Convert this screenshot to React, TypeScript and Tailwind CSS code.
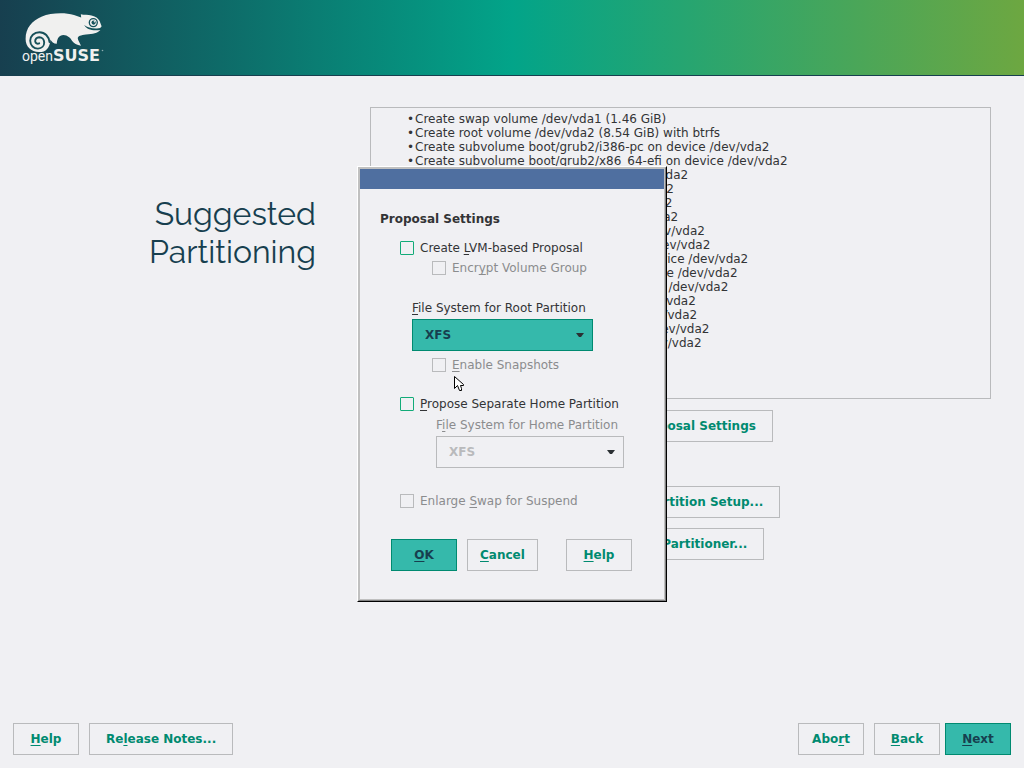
import type { ReactNode } from "react";

const swapAndRoot = [
  "Create swap volume /dev/vda1 (1.46 GiB)",
  "Create root volume /dev/vda2 (8.54 GiB) with btrfs",
];

const subvolumes = [
  "boot/grub2/i386-pc",
  "boot/grub2/x86_64-efi",
  "home",
  "opt",
  "srv",
  "tmp",
  "usr/local",
  "var/crash",
  "var/lib/mailman",
  "var/lib/named",
  "var/lib/pgsql",
  "var/log",
  "var/opt",
  "var/spool",
  "var/tmp",
];

const actions = [
  ...swapAndRoot,
  ...subvolumes.map((name) => `Create subvolume ${name} on device /dev/vda2`),
];

/** Label text with its keyboard accelerator underlined; "&" marks the letter. */
function Accel({ text }: { text: string }) {
  const at = text.indexOf("&");
  if (at < 0) return <>{text}</>;
  return (
    <span>
      {text.slice(0, at)}
      <span className="underline decoration-1 underline-offset-2 [text-decoration-skip-ink:none]">
        {text[at + 1]}
      </span>
      {text.slice(at + 2)}
    </span>
  );
}

const buttonStyles = {
  plain: "h-8 min-w-[66px] border border-[#b9babc] px-3 font-bold whitespace-nowrap text-[#008a70]",
  wide: "h-8 min-w-[66px] border border-[#b9babc] px-4 font-bold whitespace-nowrap text-[#008a70]",
  primary:
    "h-8 min-w-[66px] border border-[#008a70] bg-[#35b9ab] px-3 font-bold whitespace-nowrap text-[#173f4f]",
};

function Button({ text, kind = "plain" }: { text: string; kind?: keyof typeof buttonStyles }) {
  return (
    <button type="button" className={buttonStyles[kind]}>
      <Accel text={text} />
    </button>
  );
}

function CheckBox({ text, disabled = false }: { text: string; disabled?: boolean }) {
  return (
    <label
      className={
        disabled
          ? "flex h-5 items-center gap-1.5 whitespace-nowrap text-[#8b8c8e]"
          : "flex h-5 items-center gap-1.5 whitespace-nowrap"
      }
    >
      <input
        type="checkbox"
        disabled={disabled}
        className="size-3.5 shrink-0 appearance-none rounded-[1px] border border-[#12ab78] disabled:rounded-none disabled:border-[#b9babc]"
      />
      <Accel text={text} />
    </label>
  );
}

function SelectField({ id, text, disabled = false }: { id: string; text: string; disabled?: boolean }) {
  return (
    <div className="flex flex-col gap-px">
      <label
        htmlFor={id}
        className={disabled ? "h-5 leading-5 whitespace-nowrap text-[#8b8c8e]" : "h-5 leading-5 whitespace-nowrap"}
      >
        <Accel text={text} />
      </label>
      <div className="relative">
        <select
          id={id}
          disabled={disabled}
          className="h-8 w-full appearance-none border border-[#008a70] bg-[#35b9ab] px-3 font-bold text-[#173f4f] opacity-100 disabled:border-[#b9babc] disabled:bg-transparent disabled:text-[#b9babc]"
        >
          <option>XFS</option>
        </select>
        <svg
          viewBox="0 0 8 4"
          className="pointer-events-none absolute top-3.5 right-[9px] h-1 w-2 fill-[#2b3033]"
          aria-hidden="true"
        >
          <path d="M0 0H8L5 4H3Z" />
        </svg>
      </div>
    </div>
  );
}

function Logo() {
  return (
    <svg viewBox="0 0 110 75" className="h-[75px] w-[110px]" role="img" aria-label="openSUSE">
      <path
        fill="#f0f0ef"
        d="M25.6 39C25.6 28 32 20.500 42 16.500C50 13.200 64 12.200 74 15L81.200 17.400L80.800 14.200C84 15 88 14.500 91.500 15.400C96 16.600 98.600 18.600 99.600 21L101.600 26.300C100.800 28 99.500 28.500 96 28.400C91 28.400 87 27.400 84.200 25C86.500 29.400 92 31 100.400 30C97.500 33.300 93 34 86 34.400C81 35 77.500 36 77.800 38.500C78 40.600 79.600 42.200 81 45.800C77 44.800 73.500 43.400 72.200 41C70.600 37.800 67.500 35 63.500 34.900C59 34.900 57 38.500 56.800 43.800C53.500 43.500 51.500 41.600 50.400 39.400C50 48 45.500 52.300 39 52.100C31 51.900 25.600 46.500 25.600 39Z"
      />
      <path
        fill="none"
        stroke="#17505a"
        strokeWidth="1.900"
        strokeLinecap="round"
        d="M49.500 42C48.800 36.500 45 32.200 39.500 32.200C34 32.300 30.200 36 30.200 40.800C30.300 45.500 33.800 48.700 38 48.600C41.800 48.400 44.300 45.700 44.200 42.400C44.100 39.200 41.900 37.200 39.200 37.200C36.700 37.300 35 39.200 35.200 41.300C35.500 43.200 37.200 44.300 39.200 43.300"
      />
      <circle cx="93.300" cy="22.600" r="4" fill="none" stroke="#14515b" strokeWidth="1.300" />
      <circle cx="93.600" cy="22.600" r="2.100" fill="#14515b" />
      <circle cx="94.400" cy="21.800" r=".7" fill="#f0f0ef" />
      <text x="22" y="61" fill="#f0f0ef" className="font-[Roboto,sans-serif] text-[14px]">
        open
      </text>
      <text x="53" y="61" fill="#f0f0ef" className="font-['DejaVu_Sans',sans-serif] text-[16px] font-bold">
        SUSE
      </text>
      <circle cx="102.500" cy="50.500" r=".8" fill="#8faeb0" />
    </svg>
  );
}

function Frame({ children }: { children: ReactNode }) {
  return (
    <div className="border border-t-white border-r-black border-b-black border-l-white">
      <div className="border border-t-[#c0c0c0] border-r-[#808080] border-b-[#808080] border-l-[#c0c0c0]">
        <div className="relative border border-[#c0c0c0] bg-[#f0f0f3]">{children}</div>
      </div>
    </div>
  );
}

function ProposalDialog() {
  return (
    <div className="fixed inset-0 flex items-center justify-center">
      <div role="dialog" aria-labelledby="dialog-title" className="w-[310px]">
        <Frame>
          <div className="h-5 bg-[#4f6fa0]" />
          <div className="px-5 pt-5 pb-7">
            <h2 id="dialog-title" className="h-5 leading-5 font-bold">
              Proposal Settings
            </h2>
            <div className="mt-[9px] pl-5">
              <CheckBox text="Create &LVM-based Proposal" />
              <div className="pl-8">
                <CheckBox text="Encr&ypt Volume Group" disabled />
              </div>
              <div className="mt-5 w-[193px] pl-3">
                <SelectField id="root-fs" text="&File System for Root Partition" />
              </div>
              <div className="mt-1 pl-8">
                <CheckBox text="&Enable Snapshots" disabled />
              </div>
              <div className="mt-[19px]">
                <CheckBox text="&Propose Separate Home Partition" />
              </div>
              <div className="mt-px w-56 pl-9">
                <SelectField id="home-fs" text="F&ile System for Home Partition" disabled />
              </div>
              <div className="mt-[23px]">
                <CheckBox text="Enlarge &Swap for Suspend" disabled />
              </div>
            </div>
            <div className="mt-7 flex justify-between pr-3 pl-[11px]">
              <div className="flex gap-2.5">
                <Button text="&OK" kind="primary" />
                <Button text="&Cancel" />
              </div>
              <Button text="&Help" />
            </div>
          </div>
          <svg
            viewBox="0 0 11 17"
            className="pointer-events-none absolute top-[207px] left-[94px] h-[17px] w-[11px]"
            aria-hidden="true"
          >
            <path
              d="M.5.5V12.500L3.500 9.500L5.500 14.500H7.500V12.500L6.500 9.500H9.500V8.500Z"
              fill="white"
              stroke="black"
            />
          </svg>
        </Frame>
      </div>
    </div>
  );
}

export default function App() {
  return (
    <div className="flex min-h-screen flex-col bg-[#f0f0f3] font-['DejaVu_Sans',sans-serif] text-[12px] leading-[14px] text-[#333436]">
      <header className="h-[76px] border-b border-[#173f4f] bg-linear-to-r/srgb from-[#173f4f] via-[#02a489] to-[#6da741]">
        <Logo />
      </header>

      <main className="grid flex-1 grid-cols-[316px_1fr] content-start gap-x-[54px] pt-[31px] pr-[33px]">
        <h1 className="pt-[88px] text-right font-[Raleway,Lato,sans-serif] text-[32px] leading-[38px] font-normal text-[#173f4f]">
          Suggested
          <br />
          Partitioning
        </h1>
        <section className="flex flex-col items-center" aria-label="Partitioning proposal">
          <ul className="min-h-[292px] w-full border border-[#b9babc] pt-1 pl-11">
            {actions.map((action) => (
              <li
                key={action}
                className="before:-ml-2 before:inline-block before:w-2 before:content-['•']"
              >
                {action}
              </li>
            ))}
          </ul>
          <div className="mt-[11px] flex flex-col items-center">
            <Button text="Edit Proposal Settings" kind="wide" />
            <div className="mt-11 flex flex-col items-center gap-2.5">
              <Button text="Create Partition Setup..." kind="wide" />
              <Button text="Expert Partitioner..." kind="wide" />
            </div>
          </div>
        </section>
      </main>

      <footer className="flex justify-between p-[13px]">
        <div className="flex gap-2.5">
          <Button text="&Help" />
          <Button text="Re&lease Notes..." kind="wide" />
        </div>
        <div className="flex gap-[5px]">
          <div className="flex gap-2.5">
            <Button text="Abo&rt" />
            <Button text="&Back" />
          </div>
          <Button text="&Next" kind="primary" />
        </div>
      </footer>

      <ProposalDialog />
    </div>
  );
}
